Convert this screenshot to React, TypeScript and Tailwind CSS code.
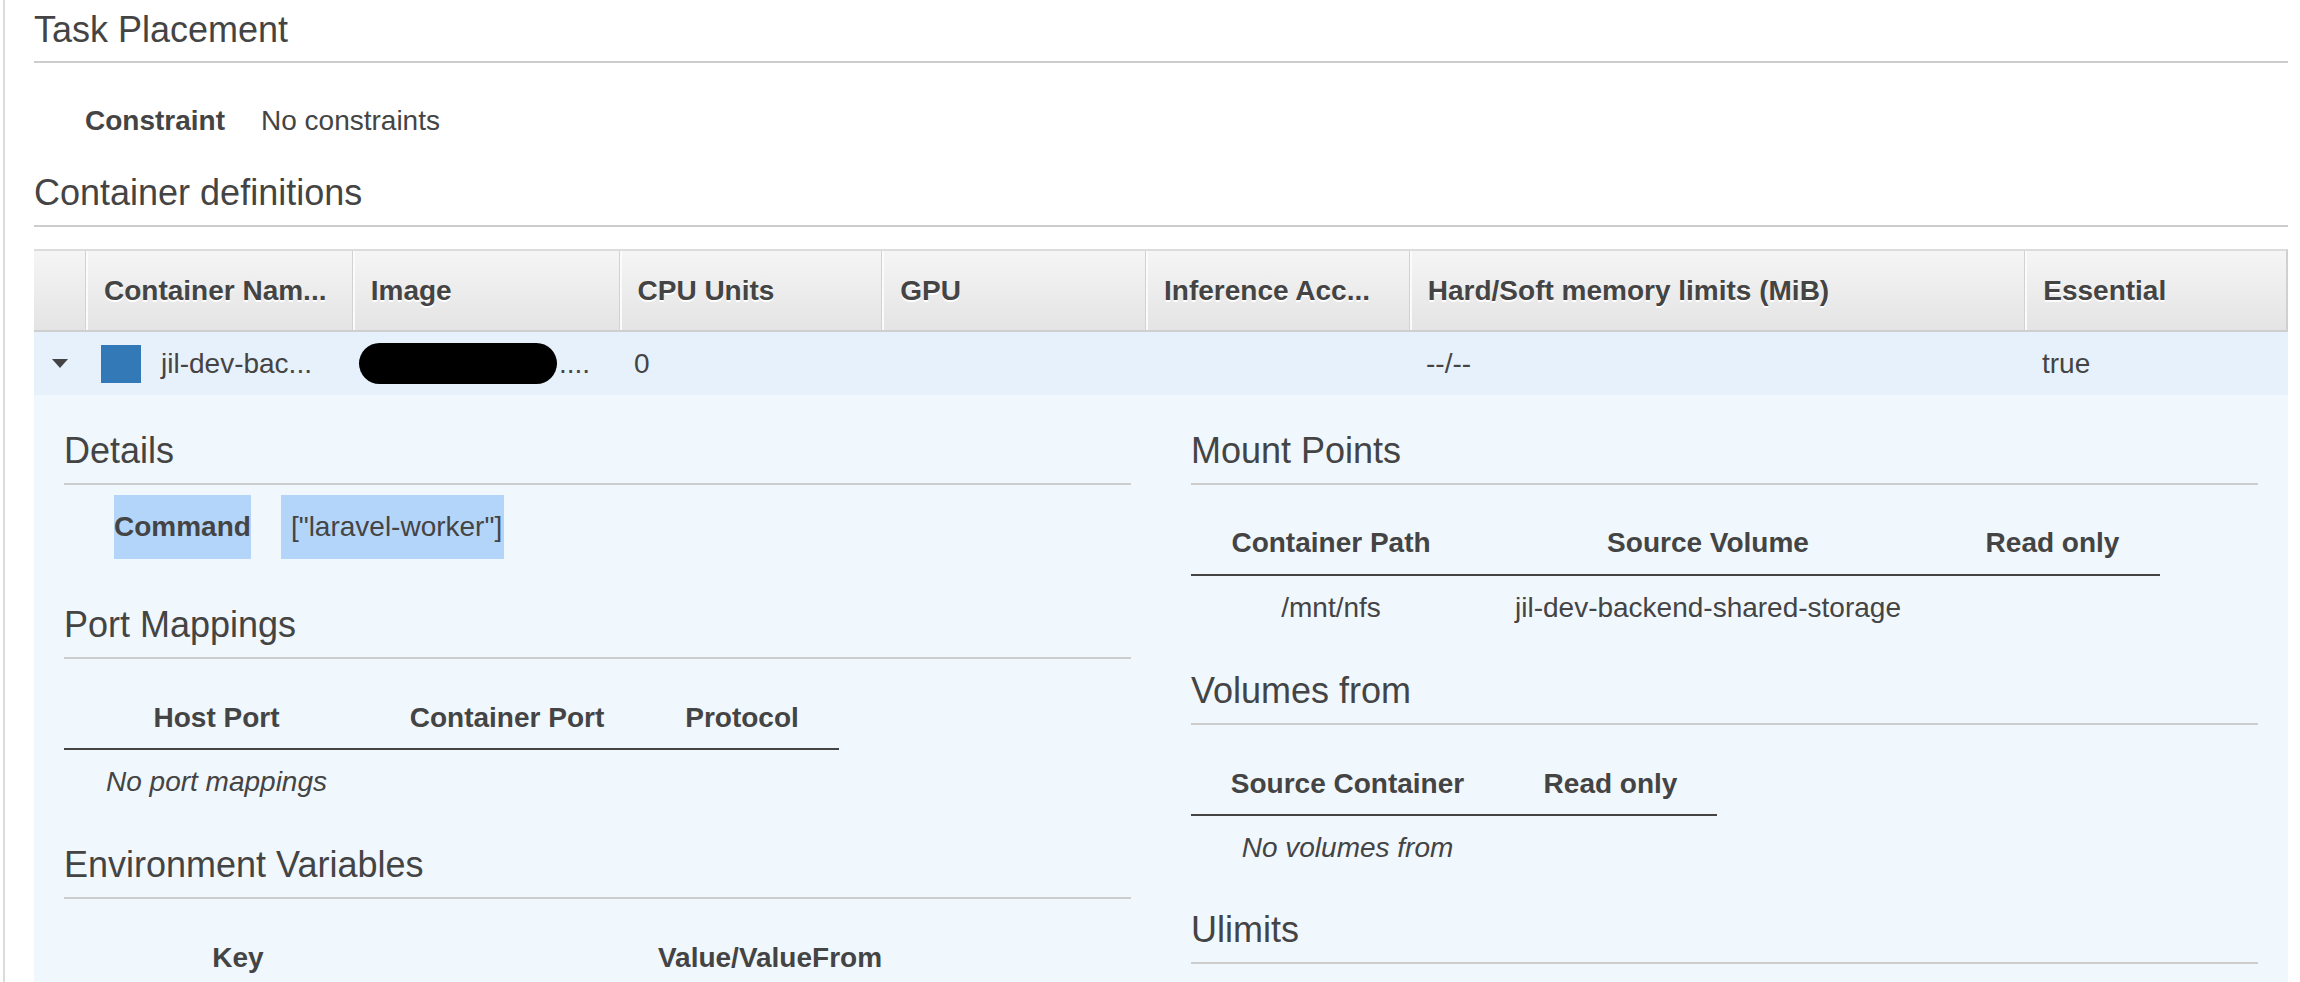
import React from 'react';

type Col = { label: string; width: number };

const SectionTitle: React.FC<{ title: string; className?: string }> = ({ title, className = '' }) => (
  <h3 className={`text-[36px] leading-[40px] pb-[12px] border-b-2 border-[#cdcdcd] font-normal ${className}`}>
    {title}
  </h3>
);

const MiniTable: React.FC<{
  cols: Col[];
  rows: React.ReactNode[][];
  headerPb?: string;
  className?: string;
}> = ({ cols, rows, headerPb = 'pb-[14px]', className = '' }) => {
  const total = cols.reduce((s, c) => s + c.width, 0);
  return (
    <div className={className} style={{ width: total }}>
      <div className={`flex border-b-2 border-[#444] ${headerPb}`}>
        {cols.map((c) => (
          <div key={c.label} className="text-center font-bold leading-[32px]" style={{ width: c.width }}>
            {c.label}
          </div>
        ))}
      </div>
      {rows.map((r, i) => (
        <div key={i} className="flex pt-[16px]">
          {r.map((cell, j) => (
            <div key={j} className="text-center leading-[32px] whitespace-nowrap" style={{ width: cols[j].width }}>
              {cell}
            </div>
          ))}
        </div>
      ))}
    </div>
  );
};

const headerCols: Col[] = [
  { label: '', width: 51 },
  { label: 'Container Nam...', width: 267 },
  { label: 'Image', width: 267 },
  { label: 'CPU Units', width: 263 },
  { label: 'GPU', width: 264 },
  { label: 'Inference Acc...', width: 264 },
  { label: 'Hard/Soft memory limits (MiB)', width: 616 },
  { label: 'Essential', width: 262 },
];

export default function App() {
  return (
    <div className="w-full min-h-screen bg-white text-[#444] text-[28px] font-['Liberation_Sans',Arial,Helvetica,sans-serif]">
      <div className="ml-[3px] border-l-2 border-[#dcdcdc] pl-[29px] pr-[12px] h-[982px] overflow-hidden">
        <h3 className="pt-[10px] text-[36px] leading-[40px] pb-[11px] border-b-2 border-[#cdcdcd]">Task Placement</h3>

        <div className="mt-[42px] flex pl-[51px] leading-[32px]">
          <span className="font-bold">Constraint</span>
          <span className="ml-[36px]">No constraints</span>
        </div>

        <SectionTitle title="Container definitions" className="mt-[36px]" />

        <div className="mt-[22px]">
          {/* header */}
          <div className="flex h-[83px] border-t-2 border-r-2 border-b-2 border-t-[#dcdcdc] border-r-[#d0d0d0] border-b-[#cfcfcf] bg-linear-to-b from-[#f5f5f5] to-[#e4e4e4]">
            {headerCols.map((c, i) => (
              <div
                key={i}
                className={`flex items-center pl-[18px] font-bold whitespace-nowrap [text-shadow:0_2px_0_#fff] ${
                  i > 0 ? 'border-l border-[#d2d2d2] shadow-[inset_2px_0_0_#fbfbfb]' : ''
                }`}
                style={{ width: c.width }}
              >
                {c.label}
              </div>
            ))}
          </div>

          {/* container row */}
          <div className="flex h-[63px] items-center bg-[#e7f1fb] leading-[32px]">
            <div className="w-[51px] flex justify-center">
              <svg width="16" height="10" viewBox="0 0 16 10">
                <path d="M0 0 L16 0 L8 9 Z" fill="#444" />
              </svg>
            </div>
            <div className="w-[267px] flex items-center pl-[16px]">
              <span className="w-[40px] h-[38px] bg-[#3379b7]" />
              <span className="ml-[20px]">jil-dev-bac...</span>
            </div>
            <div className="w-[267px] flex items-center pl-[7px]">
              <span className="w-[198px] h-[41px] rounded-full bg-black" />
              <span className="ml-[2px]">....</span>
            </div>
            <div className="w-[263px] pl-[15px]">0</div>
            <div className="w-[264px]" />
            <div className="w-[264px]" />
            <div className="w-[616px] pl-[16px]">--/--</div>
            <div className="w-[262px] pl-[16px]">true</div>
          </div>

          {/* expanded details */}
          <div className="grid grid-cols-2 gap-x-[60px] px-[30px] pt-[36px] pb-[40px] bg-[#f0f7fd] min-h-[600px]">
            <div>
              <SectionTitle title="Details" />
              <div className="mt-[10px] flex pl-[50px] gap-[30px]">
                <span className="h-[64px] flex items-center bg-[#b4d5fa] font-bold">Command</span>
                <span className="h-[64px] flex items-center bg-[#b4d5fa] pl-[10px] pr-[2px]">["laravel-worker"]</span>
              </div>

              <SectionTitle title="Port Mappings" className="mt-[46px]" />
              <MiniTable
                className="mt-[43px]"
                cols={[
                  { label: 'Host Port', width: 305 },
                  { label: 'Container Port', width: 276 },
                  { label: 'Protocol', width: 194 },
                ]}
                rows={[[<i key="n">No port mappings</i>, '', '']]}
              />

              <SectionTitle title="Environment Variables" className="mt-[47px]" />
              <MiniTable
                className="mt-[43px]"
                cols={[
                  { label: 'Key', width: 348 },
                  { label: 'Value/ValueFrom', width: 716 },
                ]}
                rows={[]}
              />
            </div>

            <div>
              <SectionTitle title="Mount Points" />
              <MiniTable
                className="mt-[42px]"
                headerPb="pb-[15px]"
                cols={[
                  { label: 'Container Path', width: 280 },
                  { label: 'Source Volume', width: 474 },
                  { label: 'Read only', width: 215 },
                ]}
                rows={[['/mnt/nfs', 'jil-dev-backend-shared-storage', '']]}
              />

              <SectionTitle title="Volumes from" className="mt-[47px]" />
              <MiniTable
                className="mt-[43px]"
                cols={[
                  { label: 'Source Container', width: 313 },
                  { label: 'Read only', width: 213 },
                ]}
                rows={[[<i key="v">No volumes from</i>, '']]}
              />

              <SectionTitle title="Ulimits" className="mt-[46px]" />
            </div>
          </div>
        </div>
      </div>
    </div>
  );
}
